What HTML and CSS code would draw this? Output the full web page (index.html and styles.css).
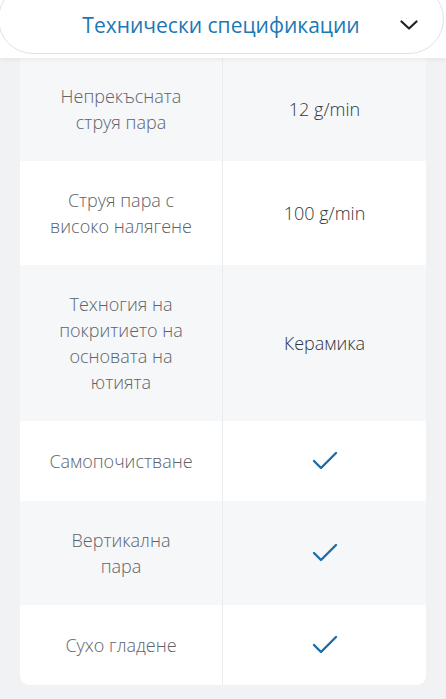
FILE: index.html
```html
<!DOCTYPE html>
<html lang="bg">
<head>
    <meta charset="UTF-8">
    <meta name="viewport" content="width=device-width, initial-scale=1.0">
    <title>Технически спецификации</title>
    <link rel="stylesheet" href="styles.css">
</head>
<body>
    <div class="header">
        <div class="pill">
            <span class="pill-title">Технически спецификации</span>
            <svg class="chevron" width="18" height="10" viewBox="0 0 18 10">
                <polyline points="1.5,1.5 9,8.5 16.5,1.5" fill="none" stroke="#1f2328" stroke-width="2.2" stroke-linecap="round" stroke-linejoin="round"/>
            </svg>
        </div>
    </div>

    <div class="specs">
        <div class="row alt">
            <div class="cell label">Непрекъсната<br>струя пара</div>
            <div class="cell value">12 g/min</div>
        </div>
        <div class="row">
            <div class="cell label">Струя пара с<br>високо налягене</div>
            <div class="cell value">100 g/min</div>
        </div>
        <div class="row alt">
            <div class="cell label">Техногия на<br>покритието на<br>основата на<br>ютията</div>
            <div class="cell value">Керамика</div>
        </div>
        <div class="row single">
            <div class="cell label">Самопочистване</div>
            <div class="cell value">
                <svg class="check" width="26" height="20" viewBox="0 0 26 20"><polyline points="2,10 9,17 24,2" fill="none" stroke="#1b6fa6" stroke-width="2.4" stroke-linecap="round" stroke-linejoin="round"/></svg>
            </div>
        </div>
        <div class="row alt">
            <div class="cell label">Вертикална<br>пара</div>
            <div class="cell value">
                <svg class="check" width="26" height="20" viewBox="0 0 26 20"><polyline points="2,10 9,17 24,2" fill="none" stroke="#1b6fa6" stroke-width="2.4" stroke-linecap="round" stroke-linejoin="round"/></svg>
            </div>
        </div>
        <div class="row single">
            <div class="cell label">Сухо гладене</div>
            <div class="cell value">
                <svg class="check" width="26" height="20" viewBox="0 0 26 20"><polyline points="2,10 9,17 24,2" fill="none" stroke="#1b6fa6" stroke-width="2.4" stroke-linecap="round" stroke-linejoin="round"/></svg>
            </div>
        </div>
    </div>
</body>
</html>
```

FILE: styles.css
```css
body {
    margin: 0;
    font-family: "Open Sans", "Noto Sans", sans-serif;
    background: #f0f2f4;
    overflow: hidden;
}
.header {
    height: 58px;
    background: white;
    box-shadow: 0 2px 4px rgba(0,0,0,0.05);
    position: relative;
    z-index: 1;
    overflow: hidden;
}
.pill {
    height: 70px;
    margin: -16px 2px 0 -2px;
    border: 1px solid #dfe2e5;
    border-radius: 36px;
    display: flex;
    align-items: center;
    justify-content: center;
    position: relative;
    box-sizing: border-box;
}
.pill-title {
    color: #1a78b5;
    font-size: 21px;
    padding-top: 12px;
}
.chevron {
    position: absolute;
    right: 25px;
    top: 35px;
}
.specs {
    margin: 0 20px;
    border-radius: 0 0 9px 9px;
    overflow: hidden;
}
.row {
    display: grid;
    grid-template-columns: 203px 1fr;
    background: white;
}
.row.alt {
    background: #f6f7f9;
}
.row:first-child .cell {
    padding-top: 25px;
}
.row.single .cell {
    padding: 27px 12px;
}
.cell {
    padding: 26px 12px;
    line-height: 26px;
    font-size: 18px;
    font-weight: 300;
    text-align: center;
    display: flex;
    align-items: center;
    justify-content: center;
}
.label {
    color: #5c636b;
    border-right: 1px solid #e9ecef;
}
.value {
    color: #2f353b;
}
.check {
    display: block;
}
```
